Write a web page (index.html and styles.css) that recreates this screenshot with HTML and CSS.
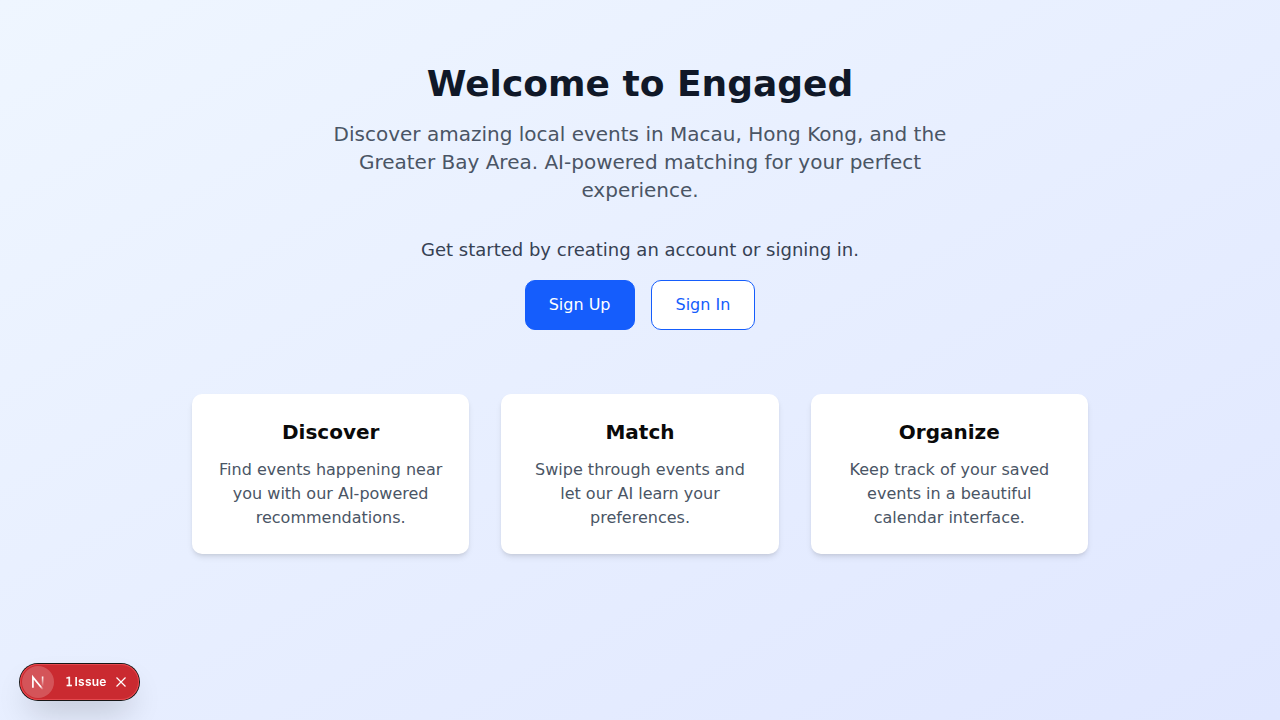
FILE: index.html
```html
<!DOCTYPE html>
<html lang="en">
<head>
<meta charset="utf-8">
<title>Engaged</title>
<link rel="stylesheet" href="styles.css">
</head>
<body>
<main class="page">
  <section class="hero">
    <h1 class="title">Welcome to Engaged</h1>
    <p class="lead">Discover amazing local events in Macau, Hong Kong, and the Greater Bay Area. AI-powered matching for your perfect experience.</p>
    <p class="prompt">Get started by creating an account or signing in.</p>
    <div class="actions">
      <a class="btn btn-primary">Sign Up</a>
      <a class="btn btn-outline">Sign In</a>
    </div>
  </section>
  <section class="features">
    <article class="card"><h3 class="card-title">Discover</h3><p class="card-text">Find events happening near you with our AI-powered recommendations.</p></article>
    <article class="card"><h3 class="card-title">Match</h3><p class="card-text">Swipe through events and let our AI learn your preferences.</p></article>
    <article class="card"><h3 class="card-title">Organize</h3><p class="card-text">Keep track of your saved events in a beautiful calendar interface.</p></article>
  </section>
</main>
<div class="toast">
  <span class="logo">
    <svg width="32" height="32" viewBox="0 0 32 32" fill="none">
      <defs>
        <linearGradient id="diag" x1="15" y1="15" x2="21.5" y2="23" gradientUnits="userSpaceOnUse"><stop stop-color="#fff"/><stop offset=".605" stop-color="#fff"/><stop offset="1" stop-color="#fff" stop-opacity="0"/></linearGradient>
        <linearGradient id="stem" x1="20.6" y1="10.5" x2="20.6" y2="20.5" gradientUnits="userSpaceOnUse"><stop stop-color="#fff"/><stop offset="1" stop-color="#fff" stop-opacity="0"/></linearGradient>
      </defs>
      <path d="M10.9 21.8V11.2L21.2 23.8" stroke="url(#diag)" stroke-width="1.7"/><path d="M20.6 10.5V20.5" stroke="url(#stem)" stroke-width="1.6"/>
    </svg>
  </span>
  <span class="issue"><span class="count">1</span> Issue</span>
  <svg class="close" width="12" height="12" viewBox="0 0 12 12" fill="none" stroke="#fff" stroke-width="1.2"><path d="M1.5 1.5l9 9M10.5 1.5l-9 9"/></svg>
</div>
</body>
</html>
```
FILE: styles.css
```css
* { box-sizing: border-box; margin: 0; }
body { font-family: "DejaVu Sans", sans-serif; line-height: 1.5; }
.page { min-height: 100vh; padding: 64px 16px; background: linear-gradient(to bottom right in oklab, #eff6ff, #e0e7ff); text-align: center; }
.hero { display: flex; flex-direction: column; align-items: center; margin-bottom: 64px; }
.title { font-size: 36px; line-height: 40px; font-weight: 700; color: #101828; margin-bottom: 16px; }
.lead { width: 672px; font-size: 20px; line-height: 28px; color: #4a5565; margin-bottom: 32px; }
.prompt { font-size: 18px; line-height: 28px; color: #364153; margin-bottom: 16px; }
.actions { display: flex; gap: 16px; }
.btn { padding: 12px 24px; border: 1px solid #155dfc; border-radius: 10px; font-size: 16px; line-height: 24px; }
.btn-primary { padding: 12px 23px; background: #155dfc; color: #fff; }
.btn-outline { background: #fff; color: #155dfc; }
.features { display: grid; grid-template-columns: repeat(3, 1fr); gap: 32px; width: 896px; margin: 0 auto; }
.card { padding: 24px; background: #fff; border-radius: 10px; box-shadow: 0 4px 6px -1px rgba(0,0,0,.1), 0 2px 4px -2px rgba(0,0,0,.1); }
.card-title { font-size: 20px; line-height: 28px; font-weight: 700; color: #0a0a0a; margin-bottom: 12px; }
.card-text { font-size: 16px; line-height: 24px; color: #4a5565; }
.toast { position: fixed; left: 20px; bottom: 20px; display: flex; align-items: center; width: 119px; height: 36px; padding: 2px; border-radius: 18px; background: #ca2a30; color: #fff; box-shadow: 0 0 0 1px #171717, inset 0 0 0 1px #e5484d, 0 16px 32px -8px rgba(0,0,0,.24); }
.logo { display: flex; width: 32px; height: 32px; border-radius: 50%; background: rgba(255,255,255,.2); }
.issue { width: 41.5px; margin-left: 11.5px; font: 600 12px/16px Inter, sans-serif; letter-spacing: .25px; white-space: nowrap; }
.count { margin-right: -1.9px; font: 400 11.5px/16px "DejaVu Sans", sans-serif; -webkit-text-stroke: .35px #fff; }
.close { margin-left: 8px; }
```
